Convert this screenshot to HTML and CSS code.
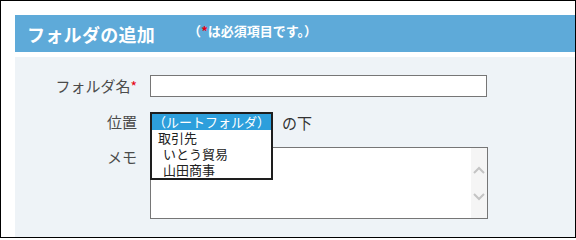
FILE: index.html
```html
<!DOCTYPE html>
<html lang="ja">
<head>
<meta charset="utf-8">
<link rel="stylesheet" href="styles.css">
</head>
<body>
<div class="frame">
  <div class="header">
    <h1 class="title">フォルダの追加</h1>
    <span class="note">（<span class="req">*</span>は必須項目です。）</span>
  </div>
  <div class="panel">
    <div class="form">
      <div class="label label-mid">フォルダ名<span class="req">*</span></div>
      <div class="field"><input class="text-input" type="text"></div>

      <div class="label label-mid">位置</div>
      <div class="field field-pos">
        <div class="select-slot">
          <ul class="listbox">
            <li class="opt selected">（ルートフォルダ）</li>
            <li class="opt">取引先</li>
            <li class="opt child">いとう貿易</li>
            <li class="opt child">山田商事</li>
          </ul>
        </div>
        <span class="suffix">の下</span>
      </div>

      <div class="label label-top">メモ</div>
      <div class="field">
        <div class="memo">
          <textarea class="memo-text"></textarea>
          <div class="scrollbar">
            <svg class="chev" width="12" height="8" viewBox="0 0 12 8"><path d="M1 7 L6 2 L11 7" fill="none" stroke="#c4c4c4" stroke-width="2"/></svg>
            <svg class="chev" width="12" height="8" viewBox="0 0 12 8"><path d="M1 1 L6 6 L11 1" fill="none" stroke="#c4c4c4" stroke-width="2"/></svg>
          </div>
        </div>
      </div>
    </div>
  </div>
</div>
</body>
</html>
```

FILE: styles.css
```css
* { box-sizing: border-box; }
html, body { margin: 0; padding: 0; }
body {
  font-family: "Noto Sans CJK JP", "Noto Sans", sans-serif;
  background: #fff;
}
.frame {
  width: 576px;
  height: 238px;
  border: 1px solid #000;
  overflow: hidden;
  background: #fff;
  padding: 14px 0 0 14px;
  display: flex;
  flex-direction: column;
}
.header {
  height: 37px;
  flex: none;
  background: #5eaad9;
  display: flex;
  align-items: center;
  padding-left: 12px;
  color: #fff;
}
.title {
  margin: 0;
  font-size: 18px;
  font-weight: 700;
  line-height: 20px;
  letter-spacing: 0.3px;
}
.note {
  margin-left: 33px;
  font-size: 13px;
  font-weight: 700;
  line-height: 16px;
  margin-top: -6px;
}
.req { color: #e60012; }
.panel {
  margin-top: 5px;
  flex: 1;
  background: #eef3f7;
  padding-top: 18px;
}
.form {
  display: grid;
  grid-template-columns: 122px 1fr;
  grid-template-rows: 22px 20px 72px;
  column-gap: 13px;
  row-gap: 15px;
}
.label {
  text-align: right;
  font-size: 15px;
  color: #4b4b4b;
  line-height: 18px;
}
.label .req { font-size: 14px; }
.label-mid { align-self: center; }
.label-top { padding-top: 1px; }
.field { display: flex; align-items: center; }
.text-input {
  width: 337px;
  height: 22px;
  border: 1px solid #767676;
  background: #fff;
  margin: 0;
  padding: 0 4px;
  outline: none;
}
.field-pos { position: relative; margin-top: 1px; }
.select-slot {
  position: relative;
  width: 123px;
  height: 20px;
}
.listbox {
  position: absolute;
  left: 0;
  top: -1px;
  width: 123px;
  margin: 0;
  padding: 0;
  list-style: none;
  background: #fff;
  border: 2px solid #1e1e1e;
  z-index: 2;
}
.opt {
  height: 16px;
  line-height: 16px;
  font-size: 13px;
  color: #222;
  padding-left: 6px;
  white-space: nowrap;
}
.opt.selected {
  background: #2d9fdc;
  color: #fff;
  padding-left: 1px;
}
.opt.child { padding-left: 11px; }
.suffix {
  margin-left: 9px;
  font-size: 15px;
  color: #333;
  line-height: 18px;
}
.memo {
  width: 338px;
  height: 72px;
  border: 1px solid #767676;
  background: #fff;
  display: flex;
}
.memo-text {
  flex: 1;
  border: none;
  margin: 0;
  resize: none;
  outline: none;
  background: #fff;
}
.scrollbar {
  width: 16px;
  background: #f5f5f5;
  display: flex;
  flex-direction: column;
  align-items: center;
  justify-content: space-between;
  padding: 18px 0 17px;
}
.chev { display: block; }
```
